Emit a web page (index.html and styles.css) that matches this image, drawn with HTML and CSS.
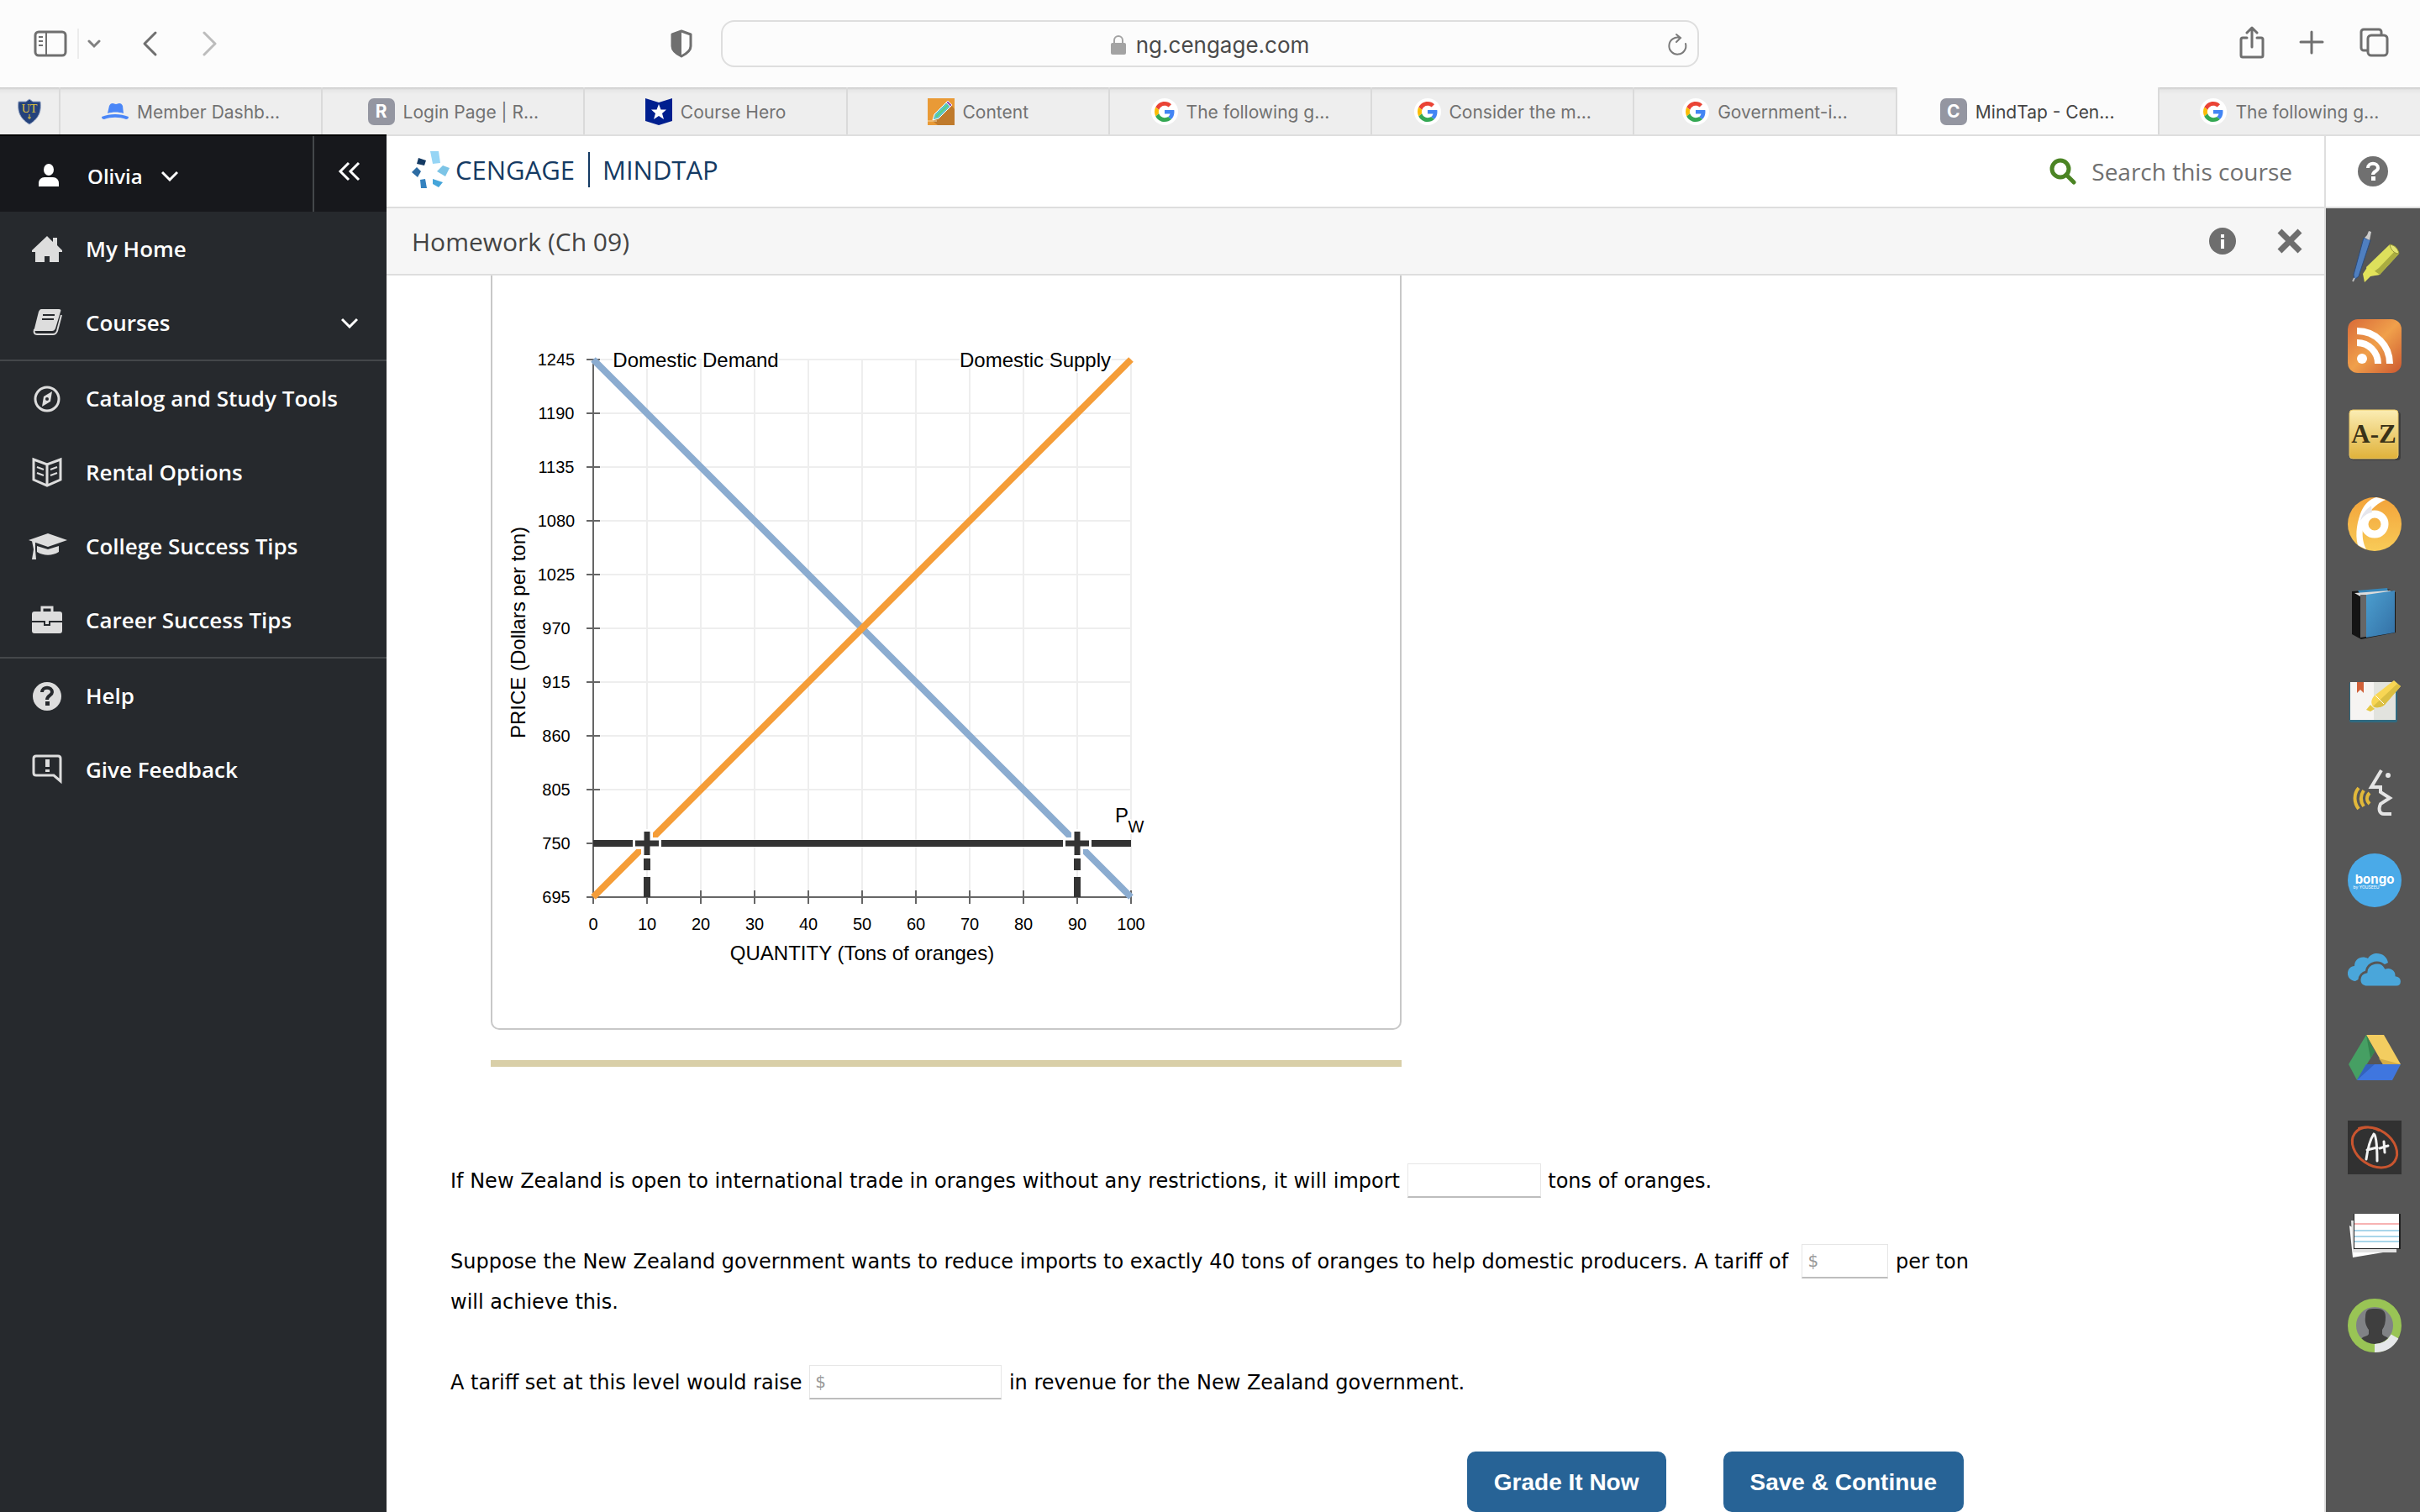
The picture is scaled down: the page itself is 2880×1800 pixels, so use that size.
FILE: index.html
```html
<!DOCTYPE html>
<html lang="en">
<head>
    <meta charset="UTF-8">
    <meta name="viewport" content="width=device-width, initial-scale=1.0">
    <title>MindTap - Cengage Learning</title>
    <link rel="stylesheet" href="styles.css">
</head>
<body>
    <!-- Shared icons -->
    <svg class="sprite" aria-hidden="true">
        <symbol id="google" viewBox="0 0 32 32">
            <circle cx="16" cy="16" r="16" fill="#fff"/>
            <g transform="translate(4 4) scale(.5)">
                <path fill="#EA4335" d="M24 9.5c3.54 0 6.71 1.22 9.21 3.6l6.85-6.85C35.9 2.38 30.47 0 24 0 14.62 0 6.51 5.38 2.56 13.22l7.98 6.19C12.43 13.72 17.74 9.5 24 9.5z"/>
                <path fill="#4285F4" d="M46.98 24.55c0-1.57-.15-3.09-.38-4.55H24v9.02h12.94c-.58 2.96-2.26 5.48-4.78 7.18l7.73 6c4.51-4.18 7.09-10.36 7.09-17.65z"/>
                <path fill="#FBBC05" d="M10.53 28.59c-.48-1.45-.76-2.99-.76-4.59s.27-3.14.76-4.59l-7.98-6.19C.92 16.46 0 20.12 0 24c0 3.88.92 7.54 2.56 10.78l7.97-6.19z"/>
                <path fill="#34A853" d="M24 48c6.48 0 11.93-2.13 15.89-5.81l-7.73-6c-2.15 1.45-4.92 2.3-8.16 2.3-6.26 0-11.57-4.22-13.47-9.91l-7.98 6.19C6.51 42.62 14.62 48 24 48z"/>
            </g>
        </symbol>
    </svg>

    <!-- Browser toolbar -->
    <div class="browser-bar">
        <div class="bar-side">
            <button class="bar-btn sidebar-btn" aria-label="Show sidebar">
                <svg width="40" height="32" viewBox="0 0 40 32" fill="none" stroke="#6f6f6f" stroke-width="3">
                    <rect x="2" y="2" width="36" height="28" rx="4"/>
                    <path d="M15 2v28M6 8h5M6 13h5M6 18h5" stroke-width="2"/>
                </svg>
            </button>
            <button class="bar-btn menu-btn" aria-label="Tab groups">
                <svg width="16" height="12" viewBox="0 0 16 12" fill="none" stroke="#808080" stroke-width="3" stroke-linecap="round"><path d="M2 3l6 6 6-6"/></svg>
            </button>
            <button class="bar-btn back-btn" aria-label="Back">
                <svg width="20" height="32" viewBox="0 0 20 32" fill="none" stroke="#6f6f6f" stroke-width="3" stroke-linecap="round" stroke-linejoin="round"><path d="M17 3L4 16l13 13"/></svg>
            </button>
            <button class="bar-btn forward-btn" aria-label="Forward">
                <svg width="20" height="32" viewBox="0 0 20 32" fill="none" stroke="#bcbcbc" stroke-width="3" stroke-linecap="round" stroke-linejoin="round"><path d="M3 3l13 13L3 29"/></svg>
            </button>
            <button class="bar-btn shield-btn" aria-label="Privacy report">
                <svg width="30" height="36" viewBox="0 0 30 36">
                    <path d="M15 3l11 4v14c0 5-5 9-11 12C9 30 4 26 4 21V7z" fill="none" stroke="#6f6f6f" stroke-width="3" stroke-linejoin="round"/>
                    <path d="M15 3v30C9 30 4 26 4 21V7z" fill="#6f6f6f"/>
                </svg>
            </button>
        </div>
        <div class="address">
            <svg width="18" height="24" viewBox="0 0 18 24"><rect x="0" y="10" width="18" height="14" rx="2" fill="#a3a3a3"/><path d="M4 11V7a5 5 0 0 1 10 0v4" fill="none" stroke="#a3a3a3" stroke-width="2"/></svg>
            <span>ng.cengage.com</span>
            <button class="bar-btn reload-btn" aria-label="Reload">
                <svg width="26" height="28" viewBox="0 0 26 28" fill="none" stroke="#7a7a7a" stroke-width="2" stroke-linecap="round"><path d="M22 13a10 10 0 1 1-7-7M11 2l5 4-5 5"/></svg>
            </button>
        </div>
        <div class="bar-side bar-right">
            <button class="bar-btn" aria-label="Share">
                <svg width="32" height="40" viewBox="0 0 32 40" fill="none" stroke="#6f6f6f" stroke-width="3" stroke-linecap="round" stroke-linejoin="round"><path d="M10 14H5a2 2 0 0 0-2 2v19a2 2 0 0 0 2 2h22a2 2 0 0 0 2-2V16a2 2 0 0 0-2-2h-5M16 25V3M10 8l6-6 6 6"/></svg>
            </button>
            <button class="bar-btn" aria-label="New tab">
                <svg width="32" height="32" viewBox="0 0 32 32" stroke="#6f6f6f" stroke-width="3" stroke-linecap="round"><path d="M15 3v25M2 15h26"/></svg>
            </button>
            <button class="bar-btn" aria-label="Tab overview">
                <svg width="36" height="36" viewBox="0 0 36 36" fill="none" stroke="#6f6f6f" stroke-width="3"><rect x="10" y="9" width="23" height="24" rx="4"/><path d="M9 27H5a3 3 0 0 1-3-3V5a3 3 0 0 1 3-3h18a3 3 0 0 1 3 3v4"/></svg>
            </button>
        </div>
    </div>

    <!-- Tabs -->
    <nav class="tabs" aria-label="Open tabs">
        <a href="#" class="tab pinned" aria-label="University of Toledo">
            <svg width="32" height="32" viewBox="0 0 32 32">
                <path d="M16 1l4 3 9 0c1 10 0 19-13 27C3 23 2 14 3 4l9 0z" fill="#24427c" stroke="#8fa0c0" stroke-width="1"/>
                <text x="16" y="17" text-anchor="middle" font-family="Liberation Serif, serif" font-size="14" fill="#e0c23c">UT</text>
                <path d="M16 19v6M14 23h4" stroke="#e0c23c"/>
            </svg>
        </a>
        <a href="#" class="tab">
            <svg width="32" height="32" viewBox="0 0 32 32" fill="#4a86f7"><path d="M7 18L9 9c1-2 2-3 4-3 2 0 2 1 4 1s2-1 4-1 3 1 4 3l1 9c-6-2-13-2-19 0z"/><path d="M0 22c10-4 22-4 32 0 0 2-1 3-3 3-8-3-18-3-26 0-2 0-3-1-3-3z"/></svg>
            <span>Member Dashb...</span>
        </a>
        <a href="#" class="tab"><span class="letter">R</span><span>Login Page | R...</span></a>
        <a href="#" class="tab">
            <svg width="32" height="32" viewBox="0 0 32 32"><path d="M0 0l16 5L32 0v27l-16 5-16-5z" fill="#001f8f"/><path d="M16 7l2.500 6.500h6.500l-5 4.500 2 7-6-4-6 4 2-7-5-4.500h6.500z" fill="#fff"/></svg>
            <span>Course Hero</span>
        </a>
        <a href="#" class="tab">
            <svg width="32" height="32" viewBox="0 0 32 32"><rect width="32" height="32" fill="#e99a36"/><path d="M28 8l4 5v19H12L6 27z" fill="#bf7a2c"/><path d="M6 26l2-7L22 5l5 5-14 14z" fill="#5fc3c9" stroke="#fff"/><path d="M10 22L24 8" stroke="#5ad17d" stroke-width="2"/><path d="M22 5l2-2 5 5-2 2z" fill="#9355b8" stroke="#eee"/><path d="M0 27h11" stroke="#f6d9a8"/></svg>
            <span>Content</span>
        </a>
        <a href="#" class="tab"><svg width="32" height="32"><use href="#google"/></svg><span>The following g...</span></a>
        <a href="#" class="tab"><svg width="32" height="32"><use href="#google"/></svg><span>Consider the m...</span></a>
        <a href="#" class="tab"><svg width="32" height="32"><use href="#google"/></svg><span>Government-i...</span></a>
        <a href="#" class="tab active"><span class="letter">C</span><span>MindTap - Cen...</span></a>
        <a href="#" class="tab"><svg width="32" height="32"><use href="#google"/></svg><span>The following g...</span></a>
    </nav>

    <div class="layout">
        <!-- Left navigation -->
        <aside class="sidebar">
            <div class="user-bar">
                <button class="user">
                    <svg width="48" height="28" viewBox="0 0 48 28" fill="#fff"><ellipse cx="26" cy="7" rx="6" ry="7"/><path d="M14 27v-4c0-4 3-7 7-7h10c4 0 7 3 7 7v4z"/></svg>
                    <span>Olivia</span>
                    <svg class="chevron" width="20" height="14" viewBox="0 0 20 14" fill="none" stroke="#fff" stroke-width="3"><path d="M1 3l9 9 9-9"/></svg>
                </button>
                <button class="collapse" aria-label="Collapse menu">
                    <svg width="28" height="24" viewBox="0 0 28 24" fill="none" stroke="#fff" stroke-width="3"><path d="M13 2L3 12l10 10M25 2L15 12l10 10"/></svg>
                </button>
            </div>
            <nav class="menu">
                <a href="#">
                    <svg width="48" height="36" viewBox="0 0 48 36" fill="#ddd"><path d="M24 3L6 20v2h4v12h11v-7h6v7h11V22h4v-2l-6-6V5h-5v5z"/></svg>
                    <span>My Home</span>
                </a>
                <a href="#" class="last">
                    <svg width="48" height="36" viewBox="0 0 48 36"><path d="M17 2h21c2 0 3 1 2 3l-6 20c-1 2-2 3-4 3H10c-2 0-2-1-1-3l5-20c1-2 2-3 3-3z" fill="#ddd"/><path d="M19 9h14M18 14h14" stroke="#26292d" stroke-width="2"/><path d="M9 26c-1 4 0 6 3 6h19c3 0 4-1 5-4l5-19" fill="none" stroke="#ddd" stroke-width="2"/></svg>
                    <span>Courses</span>
                    <svg class="chevron" width="20" height="14" viewBox="0 0 20 14" fill="none" stroke="#fff" stroke-width="3"><path d="M1 3l9 9 9-9"/></svg>
                </a>
                <a href="#">
                    <svg width="48" height="36" viewBox="0 0 48 36"><circle cx="24" cy="19" r="14" fill="none" stroke="#ddd" stroke-width="3"/><path d="M30 10l-2 12-10 6 2-12z" fill="#ddd"/><circle cx="24" cy="19" r="2" fill="#26292d"/></svg>
                    <span>Catalog and Study Tools</span>
                </a>
                <a href="#">
                    <svg width="48" height="36" viewBox="0 0 48 36" fill="none" stroke="#ddd" stroke-width="3"><path d="M8 3l16 6 16-6v24l-16 7-16-7zM24 9v25"/><path d="M12 12l8 3M12 19l8 3M36 12l-8 3M36 19l-8 3" stroke-width="2"/></svg>
                    <span>Rental Options</span>
                </a>
                <a href="#">
                    <svg width="48" height="36" viewBox="0 0 48 36" fill="#ddd"><path d="M2 11l23-8 23 8-23 8z"/><path d="M12 18l13 4 13-4v7c-8 5-18 5-26 0z"/><path d="M6 12l4 1v9l1 12H6l2-12z"/></svg>
                    <span>College Success Tips</span>
                </a>
                <a href="#" class="last">
                    <svg width="48" height="36" viewBox="0 0 48 36"><path d="M18 8V3h12v5" fill="none" stroke="#ddd" stroke-width="3"/><path d="M9 8h30c2 0 3 1 3 3v8H6v-8c0-2 1-3 3-3zM6 21h14v4h8v-4h14v10c0 2-1 3-3 3H9c-2 0-3-1-3-3z" fill="#ddd"/><path d="M22 19h4v4h-4z" fill="#ddd"/></svg>
                    <span>Career Success Tips</span>
                </a>
                <a href="#">
                    <svg width="48" height="36" viewBox="0 0 48 36"><circle cx="24" cy="19" r="17" fill="#ddd"/><path d="M18 14c0-7 12-7 12 0 0 4-6 4-6 9" fill="none" stroke="#26292d" stroke-width="4"/><path d="M22 25h5v5h-5z" fill="#26292d"/></svg>
                    <span>Help</span>
                </a>
                <a href="#">
                    <svg width="48" height="36" viewBox="0 0 48 36"><path d="M11 2h26c2 0 3 1 3 3v27l-8-7H11c-2 0-3-1-3-3V5c0-2 1-3 3-3z" fill="none" stroke="#ddd" stroke-width="3"/><path d="M22 6h5v9h-5zM22 18h5v3h-5z" fill="#ddd"/></svg>
                    <span>Give Feedback</span>
                </a>
            </nav>
        </aside>

        <!-- Course content -->
        <main class="main">
            <header class="brand-bar">
                <a href="#" class="brand">
                    <svg width="48" height="44" viewBox="0 0 48 44">
                        <path d="M22 0h10l2 14-9 1z" fill="#96d5f5"/>
                        <path d="M8 8l9 3-2 6-9-2z" fill="#143a63"/>
                        <path d="M6 19l5 5-4 7-7-6z" fill="#2d6ca3"/>
                        <path d="M37 17l8 3-5 10-10-6z" fill="#7cc4e6"/>
                        <path d="M10 34l6-1 2 11-7 0z" fill="#3482bf"/>
                        <path d="M25 33l12 4-5 6-7-4z" fill="#45a5da"/>
                    </svg>
                    <span>CENGAGE</span>
                    <span class="product">MINDTAP</span>
                </a>
                <button class="search">
                    <svg width="32" height="32" viewBox="0 0 32 32" fill="none" stroke="#4b8424" stroke-width="5"><circle cx="13" cy="13" r="10"/><path d="M20 20l9 9" stroke-linecap="round"/></svg>
                    <span>Search this course</span>
                </button>
            </header>
            <div class="activity-bar">
                <h1>Homework (Ch 09)</h1>
                <div class="activity-actions">
                    <button class="icon-btn" aria-label="Information">
                        <svg width="34" height="34" viewBox="0 0 34 34"><circle cx="17" cy="17" r="16" fill="#6e6e6e"/><path d="M15 9h4v4h-4zM15 15h4v11h-4z" fill="#fff"/></svg>
                    </button>
                    <button class="icon-btn" aria-label="Close">
                        <svg width="34" height="34" viewBox="0 0 34 34" stroke="#6e6e6e" stroke-width="7"><path d="M5 5l24 24M29 5L5 29"/></svg>
                    </button>
                </div>
            </div>

            <div class="content">
                <figure class="graph">
                    <svg viewBox="0 0 1080 896" role="img" aria-label="Domestic demand, domestic supply and world price of oranges">
                        <path class="grid" d="M184 100v640M248 100v640M312 100v640M376 100v640M440 100v640M504 100v640M568 100v640M632 100v640M696 100v640M760 100v640M120 100h640M120 164h640M120 228h640M120 292h640M120 356h640M120 420h640M120 484h640M120 548h640M120 612h640"/>
                        <path class="axis" d="M120 100v640h640M112 100h16M112 164h16M112 228h16M112 292h16M112 356h16M112 420h16M112 484h16M112 548h16M112 612h16M112 676h16M112 740h16M120 732v16M184 732v16M248 732v16M312 732v16M376 732v16M440 732v16M504 732v16M568 732v16M632 732v16M696 732v16M760 732v16"/>
                        <path class="demand" d="M120 100L760 740"/>
                        <path class="supply" d="M120 740L760 100"/>
                        <path class="price" d="M120 676h640"/>
                        <path class="drop" d="M184 694v14M184 716v24M696 694v14M696 716v24"/>
                        <path class="halo" d="M167 676h34M184 659v34M679 676h34M696 659v34"/>
                        <path class="plus" d="M170 676h28M184 662v28M682 676h28M696 662v28"/>

                        <g class="ticks">
                            <text x="76" y="107">1245</text>
                            <text x="76" y="171">1190</text>
                            <text x="76" y="235">1135</text>
                            <text x="76" y="299">1080</text>
                            <text x="76" y="363">1025</text>
                            <text x="76" y="427">970</text>
                            <text x="76" y="491">915</text>
                            <text x="76" y="555">860</text>
                            <text x="76" y="619">805</text>
                            <text x="76" y="683">750</text>
                            <text x="76" y="747">695</text>
                            <text x="120" y="779">0</text>
                            <text x="184" y="779">10</text>
                            <text x="248" y="779">20</text>
                            <text x="312" y="779">30</text>
                            <text x="376" y="779">40</text>
                            <text x="440" y="779">50</text>
                            <text x="504" y="779">60</text>
                            <text x="568" y="779">70</text>
                            <text x="632" y="779">80</text>
                            <text x="696" y="779">90</text>
                            <text x="760" y="779">100</text>
                        </g>
                        <g class="titles">
                            <text x="242" y="109">Domestic Demand</text>
                            <text x="646" y="109">Domestic Supply</text>
                            <text x="440" y="815">QUANTITY (Tons of oranges)</text>
                            <text transform="translate(39 425) rotate(-90)">PRICE (Dollars per ton)</text>
                            <text x="749" y="651">P</text>
                            <text x="766" y="663" class="sub">W</text>
                        </g>
                    </svg>
                </figure>
                <hr class="divider">

                <form class="questions">
                    <p>
                        <label for="imports">If New Zealand is open to international trade in oranges without any restrictions, it will import</label>
                        <input type="text" id="imports" class="w-medium">
                        tons of oranges.
                    </p>
                    <p>
                        <label for="tariff">Suppose the New Zealand government wants to reduce imports to exactly 40 tons of oranges to help domestic producers. A tariff of</label>&nbsp;
                        <input type="text" id="tariff" class="w-small" placeholder="$">
                        <span>per ton</span> <span>will achieve this.</span>
                    </p>
                    <p>
                        <label for="revenue">A tariff set at this level would raise</label>
                        <input type="text" id="revenue" class="w-large" placeholder="$">
                        in revenue for the New Zealand government.
                    </p>
                    <div class="actions">
                        <button type="button">Grade It Now</button>
                        <button type="button">Save &amp; Continue</button>
                    </div>
                </form>
            </div>
        </main>

        <!-- Course tools -->
        <aside class="rail">
            <div class="rail-head">
                <button class="icon-btn" aria-label="Help">
                    <svg width="36" height="36" viewBox="0 0 36 36"><circle cx="18" cy="18" r="18" fill="#707070"/><path d="M12 14c0-7 12-7 12 0 0 4-6 4-6 8" fill="none" stroke="#fff" stroke-width="4"/><path d="M16 24h5v5h-5z" fill="#fff"/></svg>
                </button>
            </div>
            <div class="tools">
                <a href="#" aria-label="Highlights and notes">
                    <svg viewBox="0 0 64 64">
                        <path d="M19 9l8 3-14 43-5 4-1-6z" fill="#4f7fc0" stroke="#2c4c7c"/><path d="M20 9l3-3 2-5 3 1-1 5-1 5z" fill="#ccc"/><path d="M8 57l-2 4" stroke="#bbb" stroke-width="2"/>
                        <path d="M50 17c6 1 10 5 11 11L38 53l-13 1-3-10z" fill="#dde05c"/><path d="M61 28L38 53l-13 1 12-9 20-21z" fill="#aaad40"/><path d="M24 43l-6 9 2 10 7-7 11-2z" fill="#e3e35a"/><path d="M50 17c6 1 10 5 11 11-6 0-10-5-11-11z" fill="#e4e574" stroke="#8f9136"/>
                    </svg>
                </a>
                <a href="#" aria-label="RSS feed">
                    <svg viewBox="0 0 64 64">
                        <defs><linearGradient id="rss" x1="0" y1="0" x2="1" y2="1"><stop offset="0" stop-color="#d96a38"/><stop offset=".5" stop-color="#f0a04b"/><stop offset="1" stop-color="#cc5830"/></linearGradient></defs>
                        <rect width="64" height="64" rx="12" fill="url(#rss)"/><circle cx="17" cy="47" r="6" fill="#fff"/><path d="M11 28c14 0 25 11 25 25M11 14c22 0 39 17 39 39" fill="none" stroke="#fff" stroke-width="8"/>
                    </svg>
                </a>
                <a href="#" aria-label="Glossary">
                    <svg viewBox="0 0 64 64">
                        <defs><linearGradient id="az" x1="0" y1="0" x2="0" y2="1"><stop offset="0" stop-color="#fbedb4"/><stop offset="1" stop-color="#e0b23a"/></linearGradient></defs>
                        <rect x="4" y="4" width="59" height="58" rx="4" fill="#3e3e3e"/><rect x="2" y="2" width="58" height="58" rx="4" fill="url(#az)" stroke="#e9c765"/><text x="31" y="41" text-anchor="middle" font-family="Liberation Serif, serif" font-weight="700" font-size="31" fill="#3a3218">A-Z</text>
                    </svg>
                </a>
                <a href="#" aria-label="Practice">
                    <svg viewBox="0 0 64 64">
                        <defs><linearGradient id="six" x1="0" y1="0" x2="0" y2="1"><stop offset="0" stop-color="#f3a33a"/><stop offset="1" stop-color="#f8cb58"/></linearGradient></defs>
                        <circle cx="32" cy="32" r="32" fill="url(#six)"/><circle cx="32" cy="32" r="12" fill="none" stroke="#fff" stroke-width="9"/><path d="M34 0l11 3C27 11 20 25 18 37c-1 9 0 17 4 25l-10-5c-4-14 0-30 4-40C20 8 26 2 34 0z" fill="#fff"/><path d="M28 10c-7 5-11 10-13 18 4-6 8-9 14-10z" fill="#e6e6ec"/>
                    </svg>
                </a>
                <a href="#" aria-label="eBook">
                    <svg viewBox="0 0 64 64">
                        <defs><linearGradient id="ebook" x1="0" y1="0" x2="1" y2="1"><stop offset="0" stop-color="#4b9fd0"/><stop offset="1" stop-color="#3470a5"/></linearGradient></defs>
                        <path d="M5 6l41-3 11 4v48L16 63 5 57z" fill="#141414"/><path d="M12 5l35-3 1 4-33 4z" fill="#3886b8"/><path d="M8 8l42-3 5 2-40 5z" fill="#ddd"/><path d="M15 10h7v50l-7 1z" fill="#666"/><path d="M22 10l34-5v50l-34 6z" fill="url(#ebook)"/>
                    </svg>
                </a>
                <a href="#" aria-label="Notebook">
                    <svg viewBox="0 0 64 64">
                        <rect x="2" y="8" width="57" height="48" rx="2" fill="#306a80"/><rect x="3" y="8" width="28" height="45" fill="#f6f4f2"/><rect x="31" y="8" width="26" height="45" fill="#e2e3de"/><path d="M11 8h8v13l-4-4-4 4z" fill="#d06038"/><path d="M55 6l8 7-19 22c-5 4-10 4-14 2-3-4-2-9 2-13z" fill="#f8d654"/><path d="M63 13L44 35c-5 4-10 4-14 2l29-27z" fill="#dbbf42"/><path d="M27 35l5 5-5 3-5-2z" fill="#e6c845"/><path d="M33 24l10 10" stroke="#fff"/>
                    </svg>
                </a>
                <a href="#" aria-label="Read aloud">
                    <svg viewBox="0 0 64 64" fill="none">
                        <path d="M40 7L28 27h11v6l11 7-11 7c-3 7-1 12 4 12h9" stroke="#e4e4e4" stroke-width="4"/><circle cx="48" cy="13" r="3" fill="#e4e4e4"/><path d="M13 28c-6 7-6 17 0 25M19 31c-4 6-4 13 0 19M26 34c-4 4-4 9 0 13" stroke="#e2b93a" stroke-width="4"/>
                    </svg>
                </a>
                <a href="#" aria-label="Bongo">
                    <svg viewBox="0 0 64 64">
                        <circle cx="32" cy="32" r="32" fill="#4aaae8"/><text x="32" y="36" text-anchor="middle" font-family="Inter, sans-serif" font-weight="700" font-size="15" fill="#fff">bongo</text><text x="22" y="42" text-anchor="middle" font-family="Inter, sans-serif" font-size="5" fill="#fff">by YOUSEEU</text>
                    </svg>
                </a>
                <a href="#" aria-label="OneDrive">
                    <svg viewBox="0 0 64 64" fill="#4aa6da">
                        <path d="M9 46c-12-1-12-17-1-18 0-9 9-13 16-9 6-10 22-7 24 5l-4 2z"/><path d="M21 53c-10-2-9-16 1-18 1-12 18-15 23-5 7-2 13 3 13 9 9 2 8 14 0 14z" stroke="#565656" stroke-width="3"/>
                    </svg>
                </a>
                <a href="#" aria-label="Google Drive">
                    <svg viewBox="0 0 64 64">
                        <path d="M22 4h21l20 35H42z" fill="#f3cd60"/><path d="M22 4l10 20-21 34L1 39z" fill="#469f63"/><path d="M22 39h41L53 58H11z" fill="#3f76df"/><path d="M37 32l26 7H42z" fill="#d6ad47"/><path d="M22 4l10 20-5 8z" fill="#35844f"/><path d="M22 39h10L11 58z" fill="#3362bd"/>
                    </svg>
                </a>
                <a href="#" aria-label="Gradebook">
                    <svg viewBox="0 0 64 64" fill="none" stroke-linecap="round">
                        <path fill="#313131" d="M0 0h64v64H0z"/><ellipse cx="32" cy="32" rx="29" ry="21" transform="rotate(35 32 32)" stroke="#c9552f" stroke-width="3"/><path d="M13 9c7-3 16-1 24 3" stroke="#c9552f" stroke-width="2"/><path d="M22 46c2-14 5-24 9-30 3 0 4 18 4 32M23 35l12-3M43 25l1 13M38 33l10-3" stroke="#f4f4f4" stroke-width="3"/>
                    </svg>
                </a>
                <a href="#" aria-label="Flashcards">
                    <svg viewBox="0 0 64 64">
                        <path d="M2 19l52 30-48 8z" fill="#fff"/><path d="M4 13h54v38H6z" fill="#e2e2e2"/><path d="M7 5h56v42H7z" fill="#222"/><path d="M8 5h53v41H8z" fill="#fff"/><path d="M8 17h53" stroke="#e66" stroke-width="1"/><path d="M8 25h53M8 32h53M8 38h53" stroke="#a9d6ea" stroke-width="2"/>
                    </svg>
                </a>
                <a href="#" aria-label="Progress">
                    <svg viewBox="0 0 64 64">
                        <circle cx="32" cy="32" r="23" fill="#808285"/><path d="M16 48c3-4 8-3 9-6v-5c-3-4-5-9-4-15 0-10 5-10 11-10 8 0 13 1 13 10 0 6-1 11-4 15v5c1 3 6 3 8 6-9 10-24 10-33 0z" fill="#3f3f3f"/><circle cx="32" cy="32" r="27" fill="none" stroke="#99c455" stroke-width="10"/><path d="M56 45c-5 9-13 14-24 14" fill="none" stroke="#e6e8ea" stroke-width="10"/>
                    </svg>
                </a>
            </div>
        </aside>
    </div>
</body>
</html>
```
FILE: styles.css
```css
* {
    box-sizing: border-box;
}

body {
    margin: 0;
    min-height: 100vh;
    display: flex;
    flex-direction: column;
    font-family: "Open Sans", sans-serif;
    background-color: #fff;
}

button {
    font-family: inherit;
    border: none;
    background: none;
    padding: 0;
    cursor: pointer;
}

a {
    text-decoration: none;
    color: inherit;
}

svg {
    display: block;
    flex: none;
}

.sprite {
    position: absolute;
    width: 0;
    height: 0;
}

/* Browser toolbar */
.browser-bar {
    display: grid;
    grid-template-columns: 1fr 1164px 1fr;
    align-items: center;
    height: 104px;
    background-color: #fcfcfc;
    font-family: Inter, sans-serif;
}

.bar-side {
    display: flex;
    align-items: center;
    padding-left: 40px;
}

.bar-right {
    justify-content: flex-end;
    gap: 40px;
    padding: 0 36px 2px 0;
}

.bar-btn {
    display: flex;
    align-items: center;
}

.menu-btn {
    height: 36px;
    margin-left: 12px;
    padding-left: 10px;
    border-left: 2px solid #ececec;
}

.back-btn {
    margin-left: 48px;
}

.forward-btn {
    margin-left: 52px;
}

.shield-btn {
    margin-left: auto;
    margin-right: 32px;
}

.address {
    display: flex;
    align-items: center;
    justify-content: center;
    gap: 12px;
    height: 56px;
    padding-top: 2px;
    position: relative;
    border: 2px solid #dedede;
    border-radius: 16px;
    font-size: 26px;
    color: #4a4a4a;
}

.reload-btn {
    position: absolute;
    right: 10px;
}

/* Tabs */
.tabs {
    display: flex;
    height: 56px;
    font-family: Inter, sans-serif;
    font-size: 21px;
    color: #727272;
}

.tab {
    flex: 1;
    display: flex;
    align-items: center;
    justify-content: center;
    gap: 10px;
    min-width: 0;
    padding-top: 2px;
    white-space: nowrap;
    border-right: 2px solid #dadada;
    background: linear-gradient(#c9c9c9, #e6e6e6 3px, #eee 8px);
}

.tab:last-child {
    border-right: none;
}

.tab.pinned {
    flex: none;
    width: 72px;
}

.tab.active {
    background: #fcfcfc;
    color: #444;
}

.letter {
    width: 32px;
    height: 32px;
    border-radius: 7px;
    background-color: #9496a1;
    color: #fff;
    font-weight: 700;
    line-height: 32px;
    text-align: center;
}

/* Page layout */
.layout {
    flex: 1;
    display: flex;
}

/* Left navigation */
.sidebar {
    width: 460px;
    flex: none;
    background-color: #26292d;
    color: #fff;
}

.user-bar {
    display: flex;
    height: 92px;
    background-color: #17181c;
    border-top: 2px solid #000;
}

.user {
    flex: 1;
    display: flex;
    align-items: center;
    padding: 4px 0 0 32px;
    border-right: 2px solid #44474a;
    color: #fff;
    font-size: 24px;
    font-weight: 600;
}

.user span {
    margin: 0 22px 0 24px;
}

.collapse {
    width: 86px;
    padding: 0 0 6px 28px;
}

.menu a {
    display: flex;
    align-items: center;
    gap: 22px;
    height: 88px;
    padding: 0 34px 0 32px;
    font-size: 26px;
    font-weight: 600;
}

.menu a.last {
    height: 90px;
    border-bottom: 2px solid #44474a;
}

.menu .chevron {
    margin-left: auto;
}

/* Header bars */
.main {
    flex: 1;
    min-width: 0;
}

.brand-bar {
    display: flex;
    align-items: center;
    justify-content: space-between;
    height: 88px;
    padding: 0 38px 0 30px;
    border-top: 2px solid #dedede;
    border-bottom: 2px solid #dedede;
}

.brand {
    display: flex;
    align-items: center;
    padding-bottom: 4px;
    font-size: 31px;
    color: #143a63;
}

.brand span {
    margin-left: 4px;
}

.brand .product {
    margin-left: 16px;
    padding-left: 15px;
    border-left: 2px solid #143a63;
}

.search {
    display: flex;
    align-items: center;
    gap: 18px;
    font-size: 28px;
    color: #707070;
}

.activity-bar {
    display: flex;
    align-items: center;
    justify-content: space-between;
    height: 80px;
    padding: 0 24px 0 30px;
    background-color: #f6f6f6;
    border-bottom: 2px solid #dedede;
}

.activity-bar h1 {
    margin: 0;
    font-size: 30px;
    font-weight: 400;
    color: #444;
}

.activity-actions {
    display: flex;
    gap: 46px;
}

/* Graph */
.content {
    padding: 0 76px;
}

.graph {
    max-width: 1084px;
    margin: 0 48px;
    border: 2px solid #c8c8c8;
    border-top: none;
    border-radius: 0 0 10px 10px;
}

.graph svg {
    width: 100%;
    height: auto;
    font-family: "Liberation Sans", Arial, sans-serif;
}

.grid {
    stroke: #eee;
    stroke-width: 2;
}

.axis {
    fill: none;
    stroke: #666;
    stroke-width: 2;
}

.demand,
.supply,
.price,
.drop {
    stroke-width: 8;
}

.demand {
    stroke: #8bacd0;
}

.supply {
    stroke: #f59d38;
}

.price,
.drop {
    stroke: #333;
}

.halo {
    stroke: #fff;
    stroke-width: 14;
}

.plus {
    stroke: #333;
    stroke-width: 7;
}

.ticks,
.titles {
    text-anchor: middle;
    font-size: 20px;
}

.titles {
    font-size: 24px;
    stroke: #fff;
    stroke-width: 4;
    paint-order: stroke;
}

.titles .sub {
    font-size: 20px;
}

.divider {
    max-width: 1084px;
    height: 8px;
    margin: 36px 48px 0;
    border: none;
    background-color: #d9cfa8;
}

/* Questions */
.questions {
    max-width: 1830px;
    margin-top: 112px;
    font-family: "DejaVu Sans", Verdana, sans-serif;
    font-size: 24px;
    line-height: 48px;
    color: #000;
}

.questions p {
    margin: 0 0 48px;
}

.questions input {
    height: 41px;
    margin: 0 1px;
    padding: 0 6px;
    vertical-align: 2px;
    border: 1px solid #e6e6e6;
    border-bottom: 2px solid #bdbdbd;
    font-family: inherit;
    font-size: 20px;
}

.questions input::placeholder {
    color: #999;
}

.questions .w-small {
    width: 103px;
}

.questions .w-medium {
    width: 159px;
}

.questions .w-large {
    width: 229px;
}

.actions {
    display: flex;
    justify-content: flex-end;
    gap: 68px;
    margin-top: 58px;
    padding-right: 29px;
}

.actions button {
    height: 72px;
    padding: 2px 32px 0;
    border-radius: 10px;
    background-color: #276396;
    color: #fff;
    font-family: "Liberation Sans", Arial, sans-serif;
    font-size: 28px;
    font-weight: 700;
}

/* Course tools */
.rail {
    width: 114px;
    flex: none;
    border-left: 2px solid #dedede;
    background-color: #565656;
}

.rail-head {
    display: flex;
    align-items: center;
    justify-content: center;
    height: 88px;
    background-color: #fff;
    border-top: 2px solid #dedede;
    border-bottom: 2px solid #dedede;
}

.tools {
    display: flex;
    flex-direction: column;
    align-items: center;
    gap: 42px;
    padding: 26px 0 0 4px;
}

.tools svg {
    width: 64px;
    height: 64px;
}
```
